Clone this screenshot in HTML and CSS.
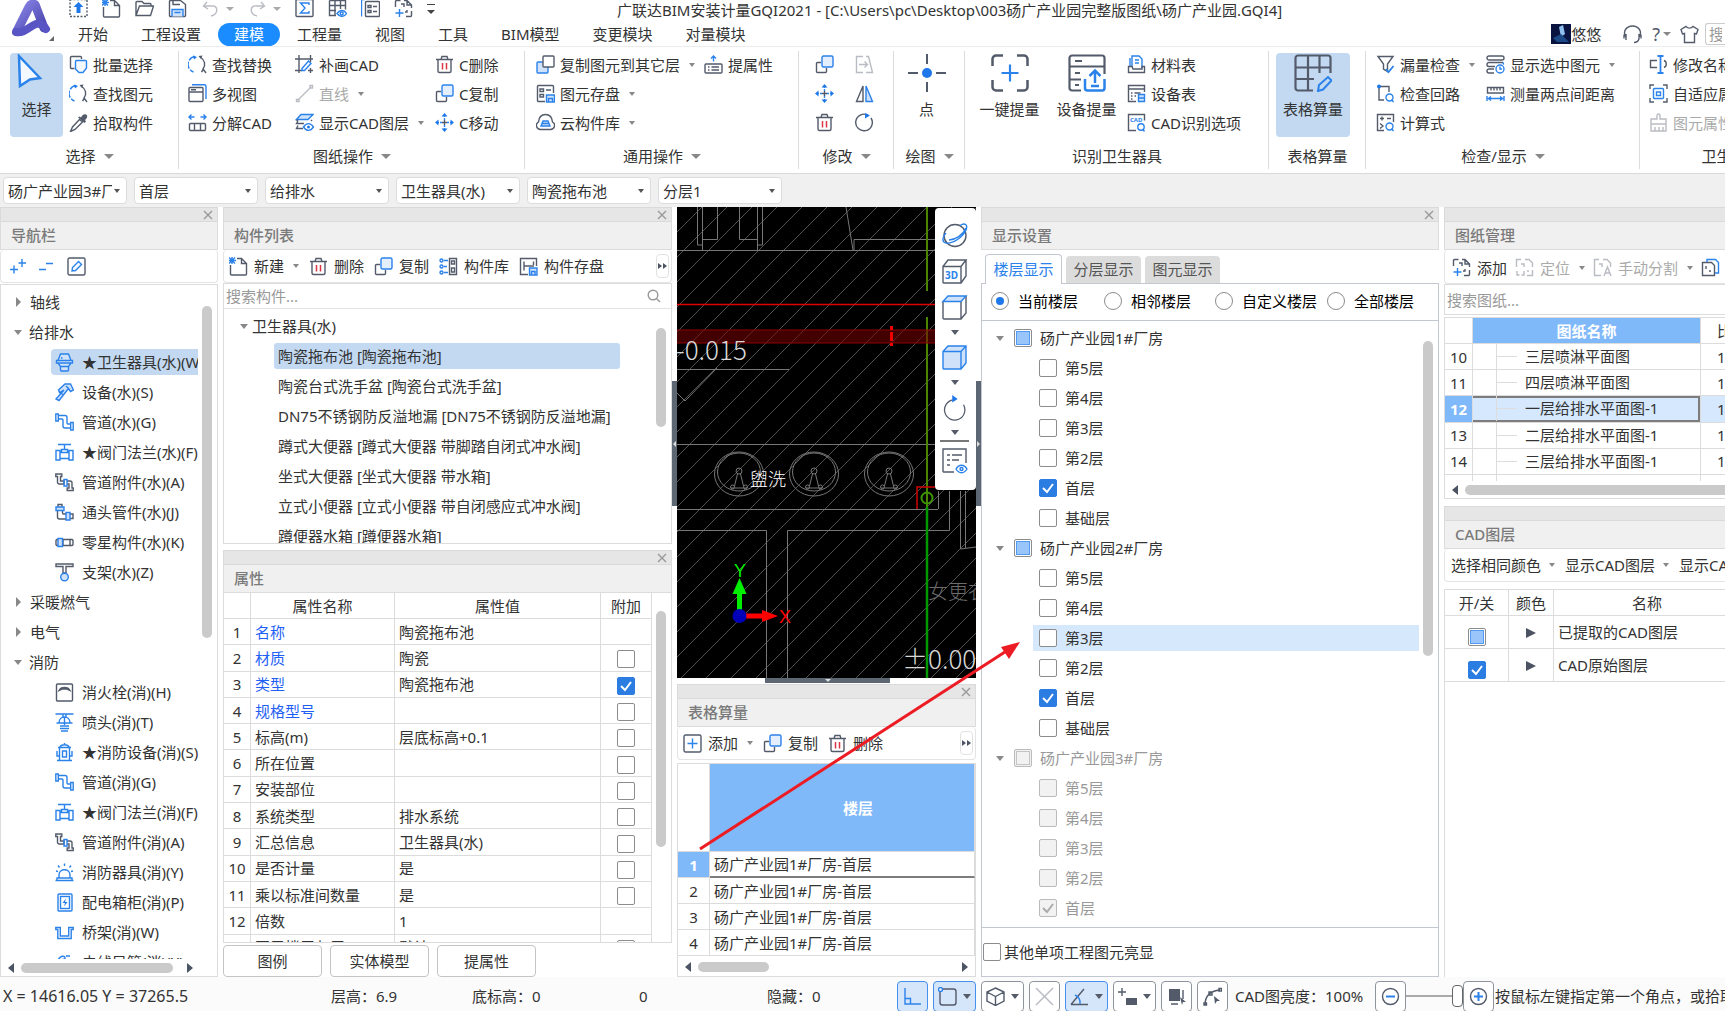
FILE: index.html
```html
<!DOCTYPE html>
<html lang="zh-CN">
<head>
<meta charset="utf-8">
<meta name="viewport" content="width=device-width, initial-scale=1">
<title>广联达BIM安装计量GQI2021</title>
<link rel="stylesheet" href="styles.css">
</head>
<body>
<svg class="sprite" aria-hidden="true">
  <defs>
    <linearGradient id="lg" x1="0" y1="0" x2="1" y2="1"><stop offset="0" stop-color="#8a86e8"/><stop offset="1" stop-color="#4440a8"/></linearGradient>
  </defs>
  <symbol id="i-updash" viewBox="0 0 19 19"><rect x="1" y="0.5" width="17" height="17" stroke-dasharray="2 1.5"/><path class="bf" d="M9.500 3l5 5h-3v6h-4V8h-3z"/></symbol>
  <symbol id="i-new" viewBox="0 0 19 19"><path d="M1.500 8v9a1 1 0 0 0 1 1h14a1 1 0 0 0 1-1V6.500l-5-5H8M12.500 1.500v5h5"/><path class="b" d="M0 .5l6 6M6 .5l-6 6M3 0v7M0 3.500h7"/></symbol>
  <symbol id="i-open" viewBox="0 0 19 19"><path d="M1 16V3.500a1 1 0 0 1 1-1h5l2 2h6a1 1 0 0 1 1 1V7M1 16.500L4.500 7H18.500l-3 9.500z"/></symbol>
  <symbol id="i-save" viewBox="0 0 19 19"><path d="M1.500 2.500a1 1 0 0 1 1-1h10l5 4v11a1 1 0 0 1-1 1h-14a1 1 0 0 1-1-1zM5 1.500v4h7"/><path class="bl" d="M4 17.500v-7h11v7M6.500 13.500h6"/></symbol>
  <symbol id="i-undo" viewBox="0 0 19 19"><path class="dim" d="M6 3L2.500 7 7 10M3 7h8c6-1 7 8-1 10"/></symbol>
  <symbol id="i-redo" viewBox="0 0 19 19"><path class="dim" d="M13 3l3.500 4L12 10M16 7H8c-6-1-7 8 1 10"/></symbol>
  <symbol id="i-sigma" viewBox="0 0 19 19"><rect x="1" y="0.5" width="17" height="17" rx="1"/><path class="b" d="M14 6V4H5.500l4.500 5-4.500 5H14v-2"/></symbol>
  <symbol id="i-grideye" viewBox="0 0 19 19"><path d="M1.500 1.500h16v9M1.500 1.500v15H8M1.500 6.500h16M1.500 11.500H8M7 1.500v15M12.500 1.500V10"/><path class="b" d="M9 14.500c3-4 7-4 9.500 0-2.500 4-6.500 4-9.500 0z"/><circle class="b" cx="13.700" cy="14.500" r="1.500"/></symbol>
  <symbol id="i-listdoc" viewBox="0 0 19 19"><path class="b" d="M4 .5H.5v17"/><rect x="4.500" y="2.500" width="14" height="15" rx="1"/><path d="M7 6.500h3v2H7zM7 11.500h3v2H7zM12 7.500h4M12 12.500h4"/></symbol>
  <symbol id="i-adddoc" viewBox="0 0 19 19"><path d="M1.500 8V2.500a1 1 0 0 1 1-1h4M10 1.500h3l4.500 4.500v3M17.500 12v4.500a1 1 0 0 1-1 1H12M13 1.500V6h4.500"/><path d="M7 5h3v3M13 11v2h-2"/><path class="b" d="M5.500 10v8M1.500 14h8"/></symbol>
  <symbol id="i-batch" viewBox="0 0 19 19"><path d="M5.500 13.500h-3a1 1 0 0 1-1-1v-10a1 1 0 0 1 1-1h9a1 1 0 0 1 1 1V4"/><path class="bw" d="M6.500 6.500a1 1 0 0 1 1-1h9a1 1 0 0 1 1 1V13l-3.500 4.500h-4L6.500 14z"/></symbol>
  <symbol id="i-find" viewBox="0 0 19 19"><path class="b" stroke-dasharray="7 1.500" d="M7 1.500A8 8 0 0 0 5.500 17"/><path class="bf" d="M5 .5l4 1.500-3 2.500z"/><path d="M12 2c5 3 6 8 3 12l3 4M15.500 14l-2 3"/><path class="gf" d="M10.500 1l4-.5-1.500 3.500z"/></symbol>
  <symbol id="i-pick" viewBox="0 0 19 19"><path d="M10.500 6.500l-7 7.500-2 4.500 4.500-2 7.500-7.500z"/><path class="gf" d="M9 4.500l1.500-1 1.500 1C13 2 15 .5 17 1.500s1.500 3.500-1 5.500l1 1.500-1.500 1.500z"/></symbol>
  <symbol id="i-multi" viewBox="0 0 19 19"><path class="b" d="M4 .8h12.500a1.500 1.500 0 0 1 1.500 1.500V15"/><rect x="1" y="3.500" width="14" height="14" rx="1"/><path d="M1 8h14M3 5.800h5"/></symbol>
  <symbol id="i-split" viewBox="0 0 19 19"><path class="b" d="M1 4h5.500M3.500 1.500L1 4l2.500 2.500M18 4h-5.500M15.500 1.500L18 4l-2.500 2.500"/><path d="M6.500 10.500h-4a1 1 0 0 0-1 1v5a1 1 0 0 0 1 1h4M6.500 10.500h6v7h-6zM12.500 10.500h4a1 1 0 0 1 1 1v5a1 1 0 0 1-1 1h-4"/></symbol>
  <symbol id="i-draw" viewBox="0 0 19 19"><path d="M0 4h18M4 0v18M0 15.500h7M15.500 0v7M13 15.500h5M15.500 13v5"/><path class="bw" d="M7 13.500L13.500 6l2.500 2.500-6.500 7H7z"/></symbol>
  <symbol id="i-line" viewBox="0 0 19 19"><path class="dim" d="M3 16L16 3M1.500 15.500h2.500v2H1.500zM15 1.500h2.500V4H15z"/></symbol>
  <symbol id="i-layers" viewBox="0 0 19 19"><path class="bl" d="M6 1.500h12L13 6.500H1.500z"/><path d="M3 8L1.500 10.500H9M16 7l1 1M3 12.500L1.500 15.500H8"/><path d="M3 6.800l-1.500 1"/><path class="b" d="M8.500 14c3-4.500 7-4.500 10 0-3 4.500-7 4.500-10 0z"/><circle class="bf" cx="13.500" cy="14" r="1.500"/></symbol>
  <symbol id="i-trash" viewBox="0 0 19 19"><path d="M1 4.500h17M6 4.500l1-3h5l1 3M3 4.500V16a1.500 1.500 0 0 0 1.500 1.500h10A1.500 1.500 0 0 0 16 16V4.500"/><path class="r" d="M7.500 8v6.500M11.500 8v6.500"/></symbol>
  <symbol id="i-copy" viewBox="0 0 19 19"><path d="M6 7.500H2.500a1 1 0 0 0-1 1v8a1 1 0 0 0 1 1h8a1 1 0 0 0 1-1V13"/><rect class="bl2" x="7" y="1" width="11" height="11" rx="1.500"/></symbol>
  <symbol id="i-copy2" viewBox="0 0 19 19"><rect class="bl" x="1" y="7" width="11" height="11" rx="1"/><rect class="w" x="7" y="1" width="11" height="11" rx="1"/></symbol>
  <symbol id="i-move" viewBox="0 0 19 19"><path class="b" stroke-dasharray="2 1" d="M9.500 2v5M9.500 12v5M2 9.500h5M12 9.500h5"/><path class="bf" d="M9.500 0l3 3.500h-6zM9.500 19l3-3.500h-6zM0 9.500l3.500-3v6zM19 9.500l-3.500-3v6z"/><path d="M9.500 7v5M7 9.500h5"/></symbol>
  <symbol id="i-form" viewBox="0 0 19 19"><path d="M9 17.500H2.500a1 1 0 0 1-1-1v-14a1 1 0 0 1 1-1h14a1 1 0 0 1 1 1V9"/><path d="M4 5h3.500v2.500H4zM10 6h5M4 10.500h3.500V13H4z"/><path class="bl" d="M10.500 11h8v7h-8zM12.500 14.500h4V18h-4z"/></symbol>
  <symbol id="i-cloud" viewBox="0 0 19 19"><path d="M4.500 16.500A4 4 0 0 1 2.500 9C3 4 6 1.500 9.500 1.500S16 4 16.500 9a4 4 0 0 1-2 7.500z"/><path class="bl" d="M7 8h5l2 5H5zM6 10.500h7"/></symbol>
  <symbol id="i-attr" viewBox="0 0 19 19"><path class="b" d="M9.500 6.500V1M7 3.500L9.500 1 12 3.500"/><rect x="1" y="9" width="17" height="9" rx="1"/><path d="M4 12h1.500M4 15h1.500M7.500 12H15M7.500 15H15"/></symbol>
  <symbol id="i-paste" viewBox="0 0 19 19"><path class="dim" d="M8 1.500H1.500v16H8M11 1.500h2.500l4 16H11M4 9.500h8M9.500 6.500l3 3-3 3"/></symbol>
  <symbol id="i-mirror" viewBox="0 0 19 19"><path d="M8 2v15.500H1.500z"/><path class="bl" d="M11 2v15.500h6.500z"/></symbol>
  <symbol id="i-rotate" viewBox="0 0 19 19"><path d="M13 2.200A8.300 8.300 0 1 0 16 5"/><path class="bf" d="M10 0l5 2.500-5 3z"/></symbol>
  <symbol id="i-cursor" viewBox="0 0 27 34"><path class="bw" stroke-width="2.500" d="M3 2l21 22-10 1.500L4 32z"/></symbol>
  <symbol id="i-point" viewBox="0 0 38 38"><path stroke-width="2" d="M19 0v10M19 28v10M0 19h10M28 19h10"/><circle class="bf" cx="19" cy="19" r="5"/></symbol>
  <symbol id="i-scan" viewBox="0 0 38 38"><path stroke-width="2.500" d="M1.500 12V5a3.500 3.500 0 0 1 3.500-3.500h7M26 1.500h7A3.500 3.500 0 0 1 36.500 5v7M36.500 26v7a3.500 3.500 0 0 1-3.500 3.500h-7M12 36.500H5A3.500 3.500 0 0 1 1.500 33v-7"/><path class="b" stroke-width="2.200" d="M19 10.500v17M10.500 19h17"/></symbol>
  <symbol id="i-device" viewBox="0 0 38 38"><path stroke-width="2.200" d="M13 36.500H4A2.500 2.500 0 0 1 1.500 34V4A2.500 2.500 0 0 1 4 1.500h30A2.500 2.500 0 0 1 36.500 4v16M1.500 12.500h35M1.500 25.500H13M7 7h7M7 19h5M7 31h4"/><path class="b" stroke-width="2.500" d="M17 25v9a2.500 2.500 0 0 0 2.500 2.500H34a2.500 2.500 0 0 0 2.500-2.500v-9M27 29V17M21.500 22l5.500-5.500 5.500 5.500M23 32h8"/></symbol>
  <symbol id="i-tcalc" viewBox="0 0 38 38"><path stroke-width="2.200" d="M19 36.500H4A2.500 2.500 0 0 1 1.500 34V4A2.500 2.500 0 0 1 4 1.500h30A2.500 2.500 0 0 1 36.500 4v15M1.500 13.500h35M1.500 25H20M14 1.500v35M25.500 1.500V19"/><path class="b" stroke-width="2" d="M24 37l1-6 9-8 3.500 3.500-8.500 9z"/></symbol>
  <symbol id="i-sheet" viewBox="0 0 19 19"><path class="b" d="M5 12V1h7l3 3v9M8 5h4M8 8h4M3 3v8"/><path d="M5 11.500H1.500v6h16v-6H15v2.500H6z"/></symbol>
  <symbol id="i-devtable" viewBox="0 0 19 19"><path d="M9 17.500H1.500v-16h16V8M1.500 5h16M4 9h1.500M7.500 9h6M4 12h1.500M4 15h1.500M7.500 12H9"/><path class="bl" d="M11.500 10.500h6v7h-6zM11.500 14h6"/></symbol>
  <symbol id="i-cadq" viewBox="0 0 19 19"><path d="M9 17.500H1.500v-16h16v6M1.500 9v8"/><text class="mini" x="3" y="9">CAD</text><circle class="b" cx="14" cy="14" r="3.200"/><path class="b" d="M15.500 16l2 2.500"/></symbol>
  <symbol id="i-filter" viewBox="0 0 19 19"><path d="M2 1.500h15L11.500 9v7.500L7.500 14V9z"/><path class="b" stroke-width="1.800" d="M10 14l2.500 3 5-6"/></symbol>
  <symbol id="i-loop" viewBox="0 0 19 19"><path d="M3 2.500V16h5M3 2.500h10V8"/><circle class="bf" cx="3" cy="2.500" r="2"/><circle class="b" cx="13.500" cy="13.500" r="3.500"/><path class="b" d="M15.500 15.500l2 2.500"/></symbol>
  <symbol id="i-calc" viewBox="0 0 19 19"><path d="M8 17.500H1.500v-16h16V9M4 5.500h4M6 3.500v4M11 5.500h4M4 10.500l3 2.500-3 2.500"/><circle class="b" cx="13.500" cy="13.500" r="3.500"/><path class="b" d="M15.500 15.500l2 2.500"/></symbol>
  <symbol id="i-shown" viewBox="0 0 19 19"><rect x="1" y="1" width="17" height="4" rx="2"/><path d="M17 7.500H3a2 2 0 0 0 0 4h6M8 14H3a2 2 0 0 0 0 4h5"/><path class="b" d="M17 7.500a1.500 1.500 0 0 1 0 2"/><circle class="b" cx="14" cy="14" r="4"/><path class="b" d="M14 11.500V14h2"/></symbol>
  <symbol id="i-measure" viewBox="0 0 19 19"><path d="M1.500 9V3.500h16V9zM5 4v2.500M8 4v2.500M11 4v2.500M14 4v2.500"/><path class="b" d="M1 12v5M18 12v5M2 14.500h15M5 12.500l-2.500 2L5 16.500M14 12.500l2.500 2-2.500 2"/></symbol>
  <symbol id="i-rename" viewBox="0 0 19 19"><path d="M8 5.500H1.500v7H8M15 5.500c3 1 3 6 0 7"/><path class="b" stroke-width="1.800" d="M8.500 1h6M8.500 18h6M11.500 1v17"/></symbol>
  <symbol id="i-adapt" viewBox="0 0 19 19"><path d="M1 5V1h4M14 1h4v4M18 14v4h-4M5 18H1v-4"/><rect class="b" x="4.500" y="4.500" width="10" height="10" rx="1"/><path class="b" d="M7.500 8h4v3.500h-4z"/></symbol>
  <symbol id="i-brush" viewBox="0 0 19 19"><path class="dim" d="M8 6V2.500a1.500 1.500 0 0 1 3 0V6h6v5H2V6zM2 11v7h15v-7M6 18v-4M10 18v-4M14 18v-4"/></symbol>
  <symbol id="i-toilet" viewBox="0 0 19 19"><path class="bl" d="M5.500 1h8l2.500 6.500H3zM1.500 7.500h16v2.500h-16zM3 10h13l-2.500 3.500V17a1 1 0 0 1-1 1h-6a1 1 0 0 1-1-1v-3.500z"/><path class="b" d="M6 5h1.500M5.500 13.500h8"/></symbol>
  <symbol id="i-tool" viewBox="0 0 19 19"><path class="bl" d="M1 16l8-9-4.500 2.500L3.500 7 10 1h5.500L18.500 7l-3 1.500-2-3L4 17.500z"/><path class="b" d="M8 11.500L4.500 9.500M11 3l2.500 2.500"/></symbol>
  <symbol id="i-pipe" viewBox="0 0 19 19"><path class="b" d="M.8 1h2.500v7H.8zM15.700 9.500h2.500v7.500h-2.500zM3.300 2.500H10a2 2 0 0 1 2 2V10a1 1 0 0 0 1 1h2.700M3.300 6H7a1 1 0 0 1 1 1v6a2 2 0 0 0 2 2h5.700"/></symbol>
  <symbol id="i-valve" viewBox="0 0 19 19"><path class="b" d="M3 1.500h13M9.500 1.500V6M6.500 6.500h6v3h-6zM5 9.500h9v6H5zM1 7.500h4v9.500H1zM14 7.500h4v9.500h-4z"/></symbol>
  <symbol id="i-fitting" viewBox="0 0 19 19"><path d="M.8 1h6v2.500H5.500V8H9v3H4.500a2 2 0 0 1-2-2V3.500H.8zM12 8h3a2 2 0 0 1 2 2v5h1.200v2.500h-6V15H14v-4h-2"/><path class="b" d="M9 6.500h3V13H9z"/></symbol>
  <symbol id="i-elbow" viewBox="0 0 19 19"><path d="M3 4V1.500h4V4M2.500 7.500V14a2 2 0 0 0 2 2H11M7.500 7.500V10a1 1 0 0 0 1 1H11M15 11h3v4.500h-3"/><path class="bl" d="M1 4h8v3.500H1zM11 9.500h4V17h-4z"/></symbol>
  <symbol id="i-conn" viewBox="0 0 19 19"><path d="M3 6.500H2a1.500 1.500 0 0 0-1 1v4a1.500 1.500 0 0 0 1 1h1M8 6.500h7v6H8z"/><path class="bl" d="M3 5.500h4.500v8H3z"/><path d="M15 6.500h2a1.500 1.500 0 0 1 1 1v4a1.500 1.500 0 0 1-1 1h-2"/></symbol>
  <symbol id="i-hanger" viewBox="0 0 19 19"><path d="M1 1h17v2.500h-7V10H8V3.500H1z"/><circle class="bl" cx="9.500" cy="14" r="3.800"/></symbol>
  <symbol id="i-hydrant" viewBox="0 0 19 19"><rect x="1.500" y="1" width="16" height="17" rx="1"/><path d="M4 7.500c2-4 9-4 11 0l-3-1.500H7z"/></symbol>
  <symbol id="i-sprinkler" viewBox="0 0 19 19"><path class="b" d="M.5 1h18M8 1v3M11 1v3M4 10c0-8 11-8 11 0M1.500 10h16M9.500 4v8M5 13h9M5 15.500h9M6 18h7"/></symbol>
  <symbol id="i-fdev" viewBox="0 0 19 19"><path class="b" d="M9.500 0v2M5 4c1-3 8-3 9 0M3 4.500h13M4.500 4.500V17M14.500 4.500V17M2 17.500h15M2 8v5h2.500M17 8v5h-2.500M7.500 8h4v6h-4z"/></symbol>
  <symbol id="i-alarm" viewBox="0 0 19 19"><path class="b" d="M.5 17.500h18M2 17.500V15h15v2.500M4 15v-3c0-7 11-7 11 0v3M9.500 3V.5M4.500 4.500l-1.500-2M14.500 4.500l1.500-2M1 8l2 .5M18 8l-2 .5"/></symbol>
  <symbol id="i-ebox" viewBox="0 0 19 19"><rect class="b" x="3" y="1" width="14" height="17" rx="1"/><rect class="b" x="5.500" y="3.500" width="9" height="12"/><path class="bf" d="M11 5.500L7.500 10H10l-1 3.500L12.500 9H10z"/></symbol>
  <symbol id="i-tray" viewBox="0 0 19 19"><path class="b" d="M.8 4.500h4.500v8.500h8.400V4.500h4.500v2h-2v9H2.800v-9h-2z"/></symbol>
  <symbol id="i-conduit" viewBox="0 0 19 19"><path class="b" d="M2 12C2 5 7 2 10 4M5 12c0-4 2-6 5-6M10 4v4M11 3h4M13 8h5"/></symbol>
  <symbol id="i-lib" viewBox="0 0 19 19"><path class="b" d="M5 3.500h4M5 9.500h3M5 15.500h4"/><circle class="b" cx="2.500" cy="3.500" r="1.500"/><circle class="b" cx="2.500" cy="9.500" r="1.500"/><circle class="b" cx="2.500" cy="15.500" r="1.500"/><path d="M10.500 1.500h7v16h-7zM12.500 4h3v3h-3zM12.500 11h3v4h-3z"/></symbol>
  <symbol id="i-store" viewBox="0 0 19 19"><path d="M9 17.500H1.500v-16h16V9M5 4.500v9M5 9h10M14.500 4.500V8"/><path class="bl" d="M10.500 11h7.500v7h-7.500zM12.500 14.500h3.500V18h-3.500z"/></symbol>
  <symbol id="i-plusbox" viewBox="0 0 19 19"><rect x="1" y="1" width="17" height="17" rx="1.500"/><path class="b" d="M9.500 4.500v10M4.500 9.500h10"/></symbol>
  <symbol id="i-locate" viewBox="0 0 19 19"><path class="dim" d="M1.500 9V1.500H6M10 1.500h4l3.500 3.500v4M17.500 12v5.500H12M6 6h3v3M2 13v4h2.500M9 13v4H6.500M13 12v2"/></symbol>
  <symbol id="i-cutA" viewBox="0 0 19 19"><path class="dim" d="M8 17.500H1.500v-16H6M10 1.500h4l3.500 3.500v4M6 6h3v3M11 18l3.500-9 3.500 9M12 15h5"/></symbol>
  <symbol id="i-docs" viewBox="0 0 19 19"><path d="M1.500 4.500h9l3 3v10h-12zM5 8v3M8 13h2"/><path class="b" d="M6 4V1.500h8.500l3 3V15H14"/></symbol>
  <symbol id="i-pp" viewBox="0 0 19 19"><path class="b" d="M5 8.500v8M1 12.500h8M13 2v8M9.500 6h7.500"/></symbol>
  <symbol id="i-mm" viewBox="0 0 19 19"><path class="b" d="M1 12.500h7M8 6.500h7"/></symbol>
  <symbol id="i-edit" viewBox="0 0 19 19"><rect x="1" y="1" width="17" height="17" rx="1.500"/><path class="bw" d="M5 14l.5-3.500 6-6 3 3-6 6z"/></symbol>
  <symbol id="i-x" viewBox="0 0 10 10"><path class="xx" d="M1 1l8 8M9 1l-8 8"/></symbol>
  <symbol id="i-mag" viewBox="0 0 14 14"><circle class="xx" cx="6" cy="6" r="4.800"/><path class="xx" d="M9.500 9.500L13 13"/></symbol>
  <symbol id="i-orbit" viewBox="0 0 27 27"><circle cx="14" cy="13.500" r="11"/><path class="b" d="M19 3.500C24 0 27 3 25 8 22 15 12 22 5 21c-5-1-3-7 0-10M8 18c6 0 14-5 17-12"/></symbol>
  <symbol id="i-cube3d" viewBox="0 0 27 27"><path d="M2 8.500h18V25H3a1 1 0 0 1-1-1zM2 8.500L7 2h18l-5 6.500M25 2v16l-5 7"/><text class="d3" x="4" y="21">3D</text></symbol>
  <symbol id="i-cubetop" viewBox="0 0 27 27"><path d="M2 7.500V24a1 1 0 0 0 1 1h17V7.500M20 25l5-6V2"/><path class="bl" d="M2 7.500L7 2h18l-5 5.500z"/></symbol>
  <symbol id="i-cubeblue" viewBox="0 0 27 27"><path class="bl" d="M2 7.500L7 2h18v17l-5 6H3a1 1 0 0 1-1-1zM2 7.500h18V25M20 7.500L25 2"/></symbol>
  <symbol id="i-rot2" viewBox="0 0 27 30"><path d="M12 6.500A11.300 11.300 0 1 0 23.500 12"/><path class="bf" d="M11 1l6 4.500-6 4z"/></symbol>
  <symbol id="i-listeye" viewBox="0 0 27 27"><path d="M13 25H3a1 1 0 0 1-1-1V2h23v14M6 8h3M11 8h10M6 13h3M11 13h7M6 18h3"/><path class="b" d="M15 22c3-5 8-5 11 0-3 5-8 5-11 0z"/><circle class="b" cx="20.500" cy="22" r="1.500"/></symbol>
  <symbol id="s-angle" viewBox="0 0 19 19"><path class="b" d="M2 1v16h16M2 11.500h5.500V17"/></symbol>
  <symbol id="s-rect" viewBox="0 0 19 19"><rect x="2" y="2" width="16" height="16" rx="2.500"/><circle class="bw" cx="2.500" cy="2.500" r="2"/></symbol>
  <symbol id="s-cube" viewBox="0 0 19 19"><path d="M9.500 1L18 5v9l-8.500 4.500L1 14V5zM1 5l8.500 4.500L18 5M9.500 9.500v9"/></symbol>
  <symbol id="s-x" viewBox="0 0 19 19"><path class="dim" stroke-width="1.500" d="M1 1l17 17M18 1L1 18"/></symbol>
  <symbol id="s-ang2" viewBox="0 0 19 19"><path d="M1 17.500h17M1 17.500L14 2"/><path class="b" d="M5 8a8 8 0 0 1 5 9"/></symbol>
  <symbol id="s-dim" viewBox="0 0 19 19"><path d="M4 1v8M0 5h8"/><path class="gf" d="M8 11h11v7H8z"/></symbol>
  <symbol id="s-sel" viewBox="0 0 19 19"><path class="gf" d="M2 2h11v12H2z"/><path d="M16 3v9M4 17h7"/><path class="gf" d="M13 10l6 5h-3l-1 3z"/></symbol>
  <symbol id="s-curve" viewBox="0 0 19 19"><path d="M2 18C2 10 6 4 17 3M1 16h2.500v2H1zM6 5h3v3H6zM16 1.500h2.500V4H16z"/><path class="gf" d="M11 9l6 5h-3l-2 3z"/></symbol>
  <symbol id="s-minus" viewBox="0 0 19 19"><circle cx="9.500" cy="9.500" r="8"/><path class="b" stroke-width="2" d="M5 9.500h9"/></symbol>
  <symbol id="s-plus" viewBox="0 0 19 19"><circle cx="9.500" cy="9.500" r="8"/><path class="b" stroke-width="2" d="M5 9.500h9M9.500 5v9"/></symbol>
  <symbol id="i-head" viewBox="0 0 19 19"><path d="M3 12C-1 6 4 1 9.500 1S20 6 16 12M3 9v6M16 9v5c-1 3-3 3.500-5 3.500M1 9.500v4M18 9.500v4"/></symbol>
  <symbol id="i-shirt" viewBox="0 0 19 19"><path d="M6 1.500c2 2 5 2 7 0l5 3-1.500 4.500-2-.5v9h-10v-9l-2 .5L1 4.500z"/></symbol>
</svg>

<header class="top">
  <div class="brand">
    <svg class="logo" viewBox="0 0 44 42" role="img" aria-label="GQI"><path d="M6 31L18 7c2-4 6-4 7 0l8 21" fill="none" stroke="url(#lg)" stroke-width="9" stroke-linecap="round" stroke-linejoin="round"/><path d="M5 32c8 2 14-6 20-8s8 3 10 5" fill="none" stroke="#5a55c4" stroke-width="8" stroke-linecap="round"/><path d="M43 36v5h-5z" fill="#666"/></svg>
  </div>
  <div class="topmain">
    <div class="quick">
      <div class="qicons">
        <button aria-label="上传"><svg class="ic"><use href="#i-updash"/></svg></button>
        <button aria-label="新建工程"><svg class="ic"><use href="#i-new"/></svg></button>
        <button aria-label="打开"><svg class="ic"><use href="#i-open"/></svg></button>
        <button aria-label="保存"><svg class="ic"><use href="#i-save"/></svg></button>
        <button class="dd" aria-label="撤销"><svg class="ic"><use href="#i-undo"/></svg><i class="tri"></i></button>
        <button class="dd" aria-label="恢复"><svg class="ic"><use href="#i-redo"/></svg><i class="tri"></i></button>
        <button aria-label="汇总"><svg class="ic"><use href="#i-sigma"/></svg></button>
        <button aria-label="查看表格"><svg class="ic"><use href="#i-grideye"/></svg></button>
        <button aria-label="列表"><svg class="ic"><use href="#i-listdoc"/></svg></button>
        <button aria-label="添加图纸"><svg class="ic"><use href="#i-adddoc"/></svg></button>
        <button class="morebtn" aria-label="更多"><i class="tri more"></i></button>
      </div>
      <h1>广联达BIM安装计量GQI2021 - [C:\Users\pc\Desktop\003砀广产业园完整版图纸\砀广产业园.GQI4]</h1>
    </div>
    <div class="tabrow">
      <nav class="tabs"><a href="#">开始</a><a href="#">工程设置</a><a href="#" class="on">建模</a><a href="#">工程量</a><a href="#">视图</a><a href="#">工具</a><a href="#">BIM模型</a><a href="#">变更模块</a><a href="#">对量模块</a></nav>
      <div class="user">
        <svg class="avatar" viewBox="0 0 20 20" aria-hidden="true"><rect width="20" height="20" fill="#0a1440"/><path d="M8 3l4-2 2 9-4 3z" fill="#8fc0ee"/><path d="M2 14l8-4 8 8H6z" fill="#1c4a86"/></svg><span class="uname">悠悠</span>
        <button aria-label="客服"><svg class="ic"><use href="#i-head"/></svg></button>
        <button class="help" aria-label="帮助">?<i class="tri"></i></button>
        <button aria-label="皮肤"><svg class="ic"><use href="#i-shirt"/></svg></button>
        <input class="gsearch" type="text" placeholder="搜索功能" aria-label="搜索功能">
      </div>
    </div>
  </div>
</header>

<div class="ribbon">
  <section class="group g1"><div class="body">
    <button class="big on"><svg class="cur"><use href="#i-cursor"/></svg>选择</button>
    <div class="col"><button><svg class="ic"><use href="#i-batch"/></svg>批量选择</button><button><svg class="ic"><use href="#i-find"/></svg>查找图元</button><button><svg class="ic"><use href="#i-pick"/></svg>拾取构件</button></div>
  </div><h2>选择<i class="tri big-tri"></i></h2></section>
  <section class="group g2"><div class="body">
    <div class="col"><button><svg class="ic"><use href="#i-find"/></svg>查找替换</button><button><svg class="ic"><use href="#i-multi"/></svg>多视图</button><button><svg class="ic"><use href="#i-split"/></svg>分解CAD</button></div>
    <div class="col"><button><svg class="ic"><use href="#i-draw"/></svg>补画CAD</button><button class="off"><svg class="ic"><use href="#i-line"/></svg>直线<i class="tri"></i></button><button><svg class="ic"><use href="#i-layers"/></svg>显示CAD图层<i class="tri"></i></button></div>
    <div class="col"><button><svg class="ic"><use href="#i-trash"/></svg>C删除</button><button><svg class="ic"><use href="#i-copy"/></svg>C复制</button><button><svg class="ic"><use href="#i-move"/></svg>C移动</button></div>
  </div><h2>图纸操作<i class="tri big-tri"></i></h2></section>
  <section class="group g3"><div class="body">
    <div class="col"><button><svg class="ic"><use href="#i-copy2"/></svg>复制图元到其它层<i class="tri"></i></button><button><svg class="ic"><use href="#i-form"/></svg>图元存盘<i class="tri"></i></button><button><svg class="ic"><use href="#i-cloud"/></svg>云构件库<i class="tri"></i></button></div>
    <div class="col"><button><svg class="ic"><use href="#i-attr"/></svg>提属性</button></div>
  </div><h2>通用操作<i class="tri big-tri"></i></h2></section>
  <section class="group g4"><div class="body">
    <div class="col"><button aria-label="复制"><svg class="ic"><use href="#i-copy"/></svg></button><button aria-label="移动"><svg class="ic"><use href="#i-move"/></svg></button><button aria-label="删除"><svg class="ic"><use href="#i-trash"/></svg></button></div>
    <div class="col"><button aria-label="延伸"><svg class="ic"><use href="#i-paste"/></svg></button><button aria-label="镜像"><svg class="ic"><use href="#i-mirror"/></svg></button><button aria-label="旋转"><svg class="ic"><use href="#i-rotate"/></svg></button></div>
  </div><h2>修改<i class="tri big-tri"></i></h2></section>
  <section class="group g5"><div class="body">
    <button class="big"><svg class="ic38"><use href="#i-point"/></svg>点</button>
  </div><h2>绘图<i class="tri big-tri"></i></h2></section>
  <section class="group g6"><div class="body">
    <button class="big"><svg class="ic38"><use href="#i-scan"/></svg>一键提量</button>
    <button class="big"><svg class="ic38"><use href="#i-device"/></svg>设备提量</button>
    <div class="col"><button><svg class="ic"><use href="#i-sheet"/></svg>材料表</button><button><svg class="ic"><use href="#i-devtable"/></svg>设备表</button><button><svg class="ic"><use href="#i-cadq"/></svg>CAD识别选项</button></div>
  </div><h2>识别卫生器具</h2></section>
  <section class="group g7"><div class="body">
    <button class="big on"><svg class="ic38"><use href="#i-tcalc"/></svg>表格算量</button>
  </div><h2>表格算量</h2></section>
  <section class="group g8"><div class="body">
    <div class="col"><button><svg class="ic"><use href="#i-filter"/></svg>漏量检查<i class="tri"></i></button><button><svg class="ic"><use href="#i-loop"/></svg>检查回路</button><button><svg class="ic"><use href="#i-calc"/></svg>计算式</button></div>
    <div class="col"><button><svg class="ic"><use href="#i-shown"/></svg>显示选中图元<i class="tri"></i></button><button><svg class="ic"><use href="#i-measure"/></svg>测量两点间距离</button></div>
  </div><h2>检查/显示<i class="tri big-tri"></i></h2></section>
  <section class="group g9"><div class="body">
    <div class="col"><button><svg class="ic"><use href="#i-rename"/></svg>修改名称</button><button><svg class="ic"><use href="#i-adapt"/></svg>自适应属性</button><button class="off"><svg class="ic"><use href="#i-brush"/></svg>图元属性刷</button></div>
  </div><h2>卫生器具</h2></section>
</div>

<div class="selects">
  <select aria-label="单项工程"><option>砀广产业园3#厂房</option></select>
  <select aria-label="楼层"><option>首层</option></select>
  <select aria-label="专业"><option>给排水</option></select>
  <select aria-label="构件类型"><option>卫生器具(水)</option></select>
  <select aria-label="构件"><option>陶瓷拖布池</option></select>
  <select aria-label="分层"><option>分层1</option></select>
</div>

<main class="work">
  <section class="panel nav">
    <div class="strip"><button aria-label="关闭"><svg class="xi"><use href="#i-x"/></svg></button></div>
    <h3>导航栏</h3>
    <div class="bar navbar"><button aria-label="全部展开"><svg class="ic"><use href="#i-pp"/></svg></button><button aria-label="全部折叠"><svg class="ic"><use href="#i-mm"/></svg></button><button aria-label="编辑"><svg class="ic"><use href="#i-edit"/></svg></button></div>
    <div class="box navbox">
      <div class="scrollrow">
        <ul class="tree">
          <li class="top-li"><i class="exp"></i>轴线</li>
          <li class="top-li"><i class="exp open"></i>给排水</li>
          <li><span class="on"><svg class="ic"><use href="#i-toilet"/></svg>★卫生器具(水)(W)</span></li>
          <li><span><svg class="ic"><use href="#i-tool"/></svg>设备(水)(S)</span></li>
          <li><span><svg class="ic"><use href="#i-pipe"/></svg>管道(水)(G)</span></li>
          <li><span><svg class="ic"><use href="#i-valve"/></svg>★阀门法兰(水)(F)</span></li>
          <li><span><svg class="ic"><use href="#i-fitting"/></svg>管道附件(水)(A)</span></li>
          <li><span><svg class="ic"><use href="#i-elbow"/></svg>通头管件(水)(J)</span></li>
          <li><span><svg class="ic"><use href="#i-conn"/></svg>零星构件(水)(K)</span></li>
          <li><span><svg class="ic"><use href="#i-hanger"/></svg>支架(水)(Z)</span></li>
          <li class="top-li"><i class="exp"></i>采暖燃气</li>
          <li class="top-li"><i class="exp"></i>电气</li>
          <li class="top-li"><i class="exp open"></i>消防</li>
          <li><span><svg class="ic"><use href="#i-hydrant"/></svg>消火栓(消)(H)</span></li>
          <li><span><svg class="ic"><use href="#i-sprinkler"/></svg>喷头(消)(T)</span></li>
          <li><span><svg class="ic"><use href="#i-fdev"/></svg>★消防设备(消)(S)</span></li>
          <li><span><svg class="ic"><use href="#i-pipe"/></svg>管道(消)(G)</span></li>
          <li><span><svg class="ic"><use href="#i-valve"/></svg>★阀门法兰(消)(F)</span></li>
          <li><span><svg class="ic"><use href="#i-fitting"/></svg>管道附件(消)(A)</span></li>
          <li><span><svg class="ic"><use href="#i-alarm"/></svg>消防器具(消)(Y)</span></li>
          <li><span><svg class="ic"><use href="#i-ebox"/></svg>配电箱柜(消)(P)</span></li>
          <li><span><svg class="ic"><use href="#i-tray"/></svg>桥架(消)(W)</span></li>
          <li><span><svg class="ic"><use href="#i-conduit"/></svg>电线导管(消)(X)</span></li>
        </ul>
        <div class="vs"><div class="thumb t-nav"></div></div>
      </div>
      <div class="hs"><i class="al"></i><div class="thumb h-nav"></div><i class="ar"></i></div>
    </div>
  </section>

  <div class="colstack">
    <section class="panel list">
      <div class="strip"><button aria-label="关闭"><svg class="xi"><use href="#i-x"/></svg></button></div>
      <h3>构件列表</h3>
      <div class="bar tools"><button><svg class="ic"><use href="#i-new"/></svg>新建<i class="tri"></i></button><button><svg class="ic"><use href="#i-trash"/></svg>删除</button><button><svg class="ic"><use href="#i-copy"/></svg>复制</button><button><svg class="ic"><use href="#i-lib"/></svg>构件库</button><button><svg class="ic"><use href="#i-store"/></svg>构件存盘</button><button class="over" aria-label="更多"><i class="ar"></i><i class="ar"></i></button></div>
      <div class="box listbox">
        <div class="search"><input type="text" placeholder="搜索构件..." aria-label="搜索构件"><svg class="mag"><use href="#i-mag"/></svg></div>
        <div class="scrollrow">
          <ul class="items">
            <li class="head"><i class="exp open"></i>卫生器具(水)</li>
            <li><span class="on">陶瓷拖布池 [陶瓷拖布池]</span></li>
            <li><span>陶瓷台式洗手盆 [陶瓷台式洗手盆]</span></li>
            <li><span>DN75不锈钢防反溢地漏 [DN75不锈钢防反溢地漏]</span></li>
            <li><span>蹲式大便器 [蹲式大便器 带脚踏自闭式冲水阀]</span></li>
            <li><span>坐式大便器 [坐式大便器 带水箱]</span></li>
            <li><span>立式小便器 [立式小便器 带自闭感应式冲水阀]</span></li>
            <li><span>蹲便器水箱 [蹲便器水箱]</span></li>
          </ul>
          <div class="vs"><div class="thumb t-list"></div></div>
        </div>
      </div>
    </section>
    <section class="panel props">
      <div class="strip"><button aria-label="关闭"><svg class="xi"><use href="#i-x"/></svg></button></div>
      <h3>属性</h3>
      <div class="box propbox scrollrow">
        <div class="clip"><table class="ptable">
          <colgroup><col class="c-n"><col class="c-name"><col><col class="c-add"></colgroup>
          <thead><tr><th></th><th>属性名称</th><th>属性值</th><th>附加</th></tr></thead>
          <tbody>
          <tr><td>1</td><td class="key">名称</td><td>陶瓷拖布池</td><td></td></tr>
          <tr><td>2</td><td class="key">材质</td><td>陶瓷</td><td><input type="checkbox" aria-label="材质附加"></td></tr>
          <tr><td>3</td><td class="key">类型</td><td>陶瓷拖布池</td><td><input type="checkbox" checked aria-label="类型附加"></td></tr>
          <tr><td>4</td><td class="key">规格型号</td><td></td><td><input type="checkbox" aria-label="规格型号附加"></td></tr>
          <tr><td>5</td><td>标高(m)</td><td>层底标高+0.1</td><td><input type="checkbox" aria-label="标高附加"></td></tr>
          <tr><td>6</td><td>所在位置</td><td></td><td><input type="checkbox" aria-label="所在位置附加"></td></tr>
          <tr><td>7</td><td>安装部位</td><td></td><td><input type="checkbox" aria-label="安装部位附加"></td></tr>
          <tr><td>8</td><td>系统类型</td><td>排水系统</td><td><input type="checkbox" aria-label="系统类型附加"></td></tr>
          <tr><td>9</td><td>汇总信息</td><td>卫生器具(水)</td><td><input type="checkbox" aria-label="汇总信息附加"></td></tr>
          <tr><td>10</td><td>是否计量</td><td>是</td><td><input type="checkbox" aria-label="是否计量附加"></td></tr>
          <tr><td>11</td><td>乘以标准间数量</td><td>是</td><td><input type="checkbox" aria-label="乘以标准间数量附加"></td></tr>
          <tr><td>12</td><td>倍数</td><td>1</td><td></td></tr>
          <tr><td>13</td><td>图元楼层归属</td><td>默认</td><td><input type="checkbox" aria-label="图元楼层归属附加"></td></tr>
          </tbody>
        </table></div>
        <div class="vs"><div class="thumb t-prop"></div></div>
      </div>
      <div class="pbtns"><button>图例</button><button>实体模型</button><button>提属性</button></div>
    </section>
  </div>

  <div class="colstack mid">
    <div class="canvas">
      <svg class="cad" viewBox="0 0 299 471" preserveAspectRatio="xMinYMin slice" role="img" aria-label="CAD 图纸">
        <defs><pattern id="hatch" width="25" height="25" patternUnits="userSpaceOnUse"><path d="M-1 26L26-1" stroke="#505050" stroke-width="1"/></pattern>
        <g id="sink"><ellipse rx="24.500" ry="22"/><ellipse cy="-2" rx="21.500" ry="19"/><circle cy="-3" r="3"/><path d="M-1.500 0l-3 12M1.500 0l3 12M-8 14H8"/><circle cx="-6.500" cy="13" r="2"/><circle cx="6.500" cy="13" r="2"/></g></defs>
        <rect width="299" height="471" fill="#000"/><rect width="299" height="471" fill="url(#hatch)"/>
        <g class="cl"><path d="M20.500 0V38H25M25.500 0V43M40.500 0V32.500H25M62.500 0V32.500H80M80.500 0V43M85.500 0V38H80M0 43.500H258M169 0l7 43M177 43V32.500H258M0 162.500H112M40 161L8 194l-8-8M0 237.500H258M0 302.500H261M0 323.500H89.500V471M110.500 471V323.500H272.500V284M261.500 284V302M283.500 284V342L299 340M288.500 284V341"/>
        <use href="#sink" x="62" y="267"/><use href="#sink" x="137" y="267"/><use href="#sink" x="212" y="267"/></g>
        <path d="M250 0V84M250 110V300" stroke="#4a8500" stroke-width="2"/><path d="M250 300V471" stroke="#009a00" stroke-width="2.500"/>
        <path d="M0 97.500H258" stroke="#e00000" stroke-width="1.500"/><rect x="-2" y="123" width="262" height="13" fill="#7a0000" fill-opacity=".55" stroke="#8c0000"/><path d="M214.500 119v20" stroke="#f00000" stroke-width="3" stroke-dasharray="4 2 9 2"/>
        <path d="M240 302V280H258" fill="none" stroke="#d00000" stroke-width="1.500"/><circle cx="250" cy="291" r="5.500" fill="none" stroke="#3c9600" stroke-width="2"/>
        <text class="ct" x="-1" y="153">-0.015</text><text class="ct cjk" x="73" y="279">盥洗</text><text class="ct gray" x="251" y="392">女更衣</text><text class="ct" x="225" y="462">±0.000</text>
        <path d="M62.500 404V386" stroke="#00ee00" stroke-width="5"/><path d="M62.500 371l7 16h-14z" fill="#0e0"/><path d="M68 409H86" stroke="#f00" stroke-width="5"/><path d="M101 409l-16-6v12z" fill="#f00"/><circle cx="62.500" cy="409" r="7" fill="#0000b8"/>
        <text class="ax" x="57" y="370" fill="#0e0">Y</text><text class="ax" x="102" y="416" fill="#f00">X</text>
      </svg>
      <i class="grip l"><i></i></i><i class="grip r"><i></i></i><i class="grip b"><i></i></i>
      <div class="float">
        <button aria-label="动态观察"><svg class="ic27"><use href="#i-orbit"/></svg></button>
        <button aria-label="三维"><svg class="ic27"><use href="#i-cube3d"/></svg></button>
        <button aria-label="俯视"><svg class="ic27"><use href="#i-cubetop"/></svg><i class="tri dk"></i></button>
        <button aria-label="实体"><svg class="ic27"><use href="#i-cubeblue"/></svg><i class="tri dk"></i></button>
        <button aria-label="旋转视图"><svg class="ic27"><use href="#i-rot2"/></svg><i class="tri dk"></i></button>
        <hr>
        <button aria-label="显示设置"><svg class="ic27"><use href="#i-listeye"/></svg></button>
      </div>
    </div>
    <section class="panel calc">
      <div class="strip"><button aria-label="关闭"><svg class="xi"><use href="#i-x"/></svg></button></div>
      <h3>表格算量</h3>
      <div class="bar tools"><button><svg class="ic"><use href="#i-plusbox"/></svg>添加<i class="tri"></i></button><button><svg class="ic"><use href="#i-copy"/></svg>复制</button><button><svg class="ic"><use href="#i-trash"/></svg>删除</button><button class="over" aria-label="更多"><i class="ar"></i><i class="ar"></i></button></div>
      <div class="box calcbox">
        <table class="ctable"><colgroup><col class="c-num"><col></colgroup>
          <thead><tr><th></th><th class="hl">楼层</th></tr></thead>
          <tbody><tr class="cur-row"><td class="hl">1</td><td>砀广产业园1#厂房-首层</td></tr><tr><td>2</td><td>砀广产业园1#厂房-首层</td></tr><tr><td>3</td><td>砀广产业园1#厂房-首层</td></tr><tr><td>4</td><td>砀广产业园1#厂房-首层</td></tr></tbody>
        </table>
        <div class="hs"><i class="al"></i><div class="thumb h-calc"></div><i class="ar"></i></div>
      </div>
    </section>
  </div>

  <section class="panel display">
    <div class="strip"><button aria-label="关闭"><svg class="xi"><use href="#i-x"/></svg></button></div>
    <h3>显示设置</h3>
    <div class="dtabs" role="tablist"><button role="tab" class="on">楼层显示</button><button role="tab">分层显示</button><button role="tab">图元显示</button></div>
    <div class="dbox">
      <div class="radios"><label><input type="radio" name="fl" checked>当前楼层</label><label><input type="radio" name="fl">相邻楼层</label><label><input type="radio" name="fl">自定义楼层</label><label><input type="radio" name="fl">全部楼层</label></div>
      <div class="floorbox scrollrow">
        <ul class="floors">
          <li class="bld"><i class="exp open"></i><label><input type="checkbox" class="partial">砀广产业园1#厂房</label></li>
          <li><label><input type="checkbox">第5层</label></li><li><label><input type="checkbox">第4层</label></li><li><label><input type="checkbox">第3层</label></li><li><label><input type="checkbox">第2层</label></li><li><label><input type="checkbox" checked>首层</label></li><li><label><input type="checkbox">基础层</label></li>
          <li class="bld"><i class="exp open"></i><label><input type="checkbox" class="partial">砀广产业园2#厂房</label></li>
          <li><label><input type="checkbox">第5层</label></li><li><label><input type="checkbox">第4层</label></li><li class="hover"><label><input type="checkbox">第3层</label></li><li><label><input type="checkbox">第2层</label></li><li><label><input type="checkbox" checked>首层</label></li><li><label><input type="checkbox">基础层</label></li>
          <li class="bld dis"><i class="exp open"></i><label><input type="checkbox" class="partial" disabled>砀广产业园3#厂房</label></li>
          <li class="dis"><label><input type="checkbox" disabled>第5层</label></li><li class="dis"><label><input type="checkbox" disabled>第4层</label></li><li class="dis"><label><input type="checkbox" disabled>第3层</label></li><li class="dis"><label><input type="checkbox" disabled>第2层</label></li><li class="dis"><label><input type="checkbox" checked disabled>首层</label></li>
        </ul>
        <div class="vs"><div class="thumb t-floor"></div></div>
      </div>
      <label class="other"><input type="checkbox">其他单项工程图元亮显</label>
    </div>
  </section>

  <div class="colstack right">
    <section class="panel drawings">
      <div class="strip"></div>
      <h3>图纸管理</h3>
      <div class="bar tools"><button><svg class="ic"><use href="#i-adddoc"/></svg>添加</button><button class="off"><svg class="ic"><use href="#i-locate"/></svg>定位<i class="tri"></i></button><button class="off"><svg class="ic"><use href="#i-cutA"/></svg>手动分割<i class="tri"></i></button><button aria-label="复制图纸"><svg class="ic"><use href="#i-docs"/></svg></button></div>
      <div class="search dsearch"><input type="text" placeholder="搜索图纸..." aria-label="搜索图纸"></div>
      <div class="box drawbox">
        <table class="dtable"><colgroup><col class="c-i"><col class="c-d"><col></colgroup>
          <thead><tr><th></th><th class="hl">图纸名称</th><th>比例</th></tr></thead>
          <tbody>
          <tr><td>10</td><td><span class="branch">三层喷淋平面图</span></td><td>1:1</td></tr>
          <tr><td>11</td><td><span class="branch">四层喷淋平面图</span></td><td>1:1</td></tr>
          <tr class="sel"><td class="hl">12</td><td><span class="branch">一层给排水平面图-1</span></td><td>1:1</td></tr>
          <tr><td>13</td><td><span class="branch">二层给排水平面图-1</span></td><td>1:1</td></tr>
          <tr><td>14</td><td><span class="branch">三层给排水平面图-1</span></td><td>1:1</td></tr>
          <tr class="rest"><td></td><td><span class="branch none"></span></td><td></td></tr>
          </tbody></table>
        <div class="hs"><i class="al"></i><div class="thumb h-draw"></div></div>
      </div>
    </section>
    <section class="panel layers">
      <div class="strip"></div>
      <h3>CAD图层</h3>
      <div class="bar tools lay"><button>选择相同颜色<i class="tri"></i></button><button>显示CAD图层<i class="tri"></i></button><button>显示CAD图元</button></div>
      <div class="laybox">
        <table class="ltable"><colgroup><col class="c-sw"><col class="c-co"><col></colgroup>
          <thead><tr><th>开/关</th><th>颜色</th><th>名称</th></tr></thead>
          <tbody><tr><td><input type="checkbox" class="partial" aria-label="已提取的CAD图层"></td><td><i class="play"></i></td><td>已提取的CAD图层</td></tr>
          <tr><td><input type="checkbox" checked aria-label="CAD原始图层"></td><td><i class="play"></i></td><td>CAD原始图层</td></tr></tbody></table>
      </div>
    </section>
  </div>

  <svg class="pointer" viewBox="0 0 330 220" aria-hidden="true"><path d="M4 212L312 13" stroke="#ed1c24" stroke-width="3"/><path d="M324 5l-11 17-8-12z" fill="#ed1c24"/></svg>
</main>

<footer class="status">
  <span class="s-xy">X = 14616.05 Y = 37265.5</span><span class="s-h">层高：6.9</span><span class="s-b">底标高：0</span><span class="s-z">0</span><span class="s-hid">隐藏：0</span>
  <div class="sbtns">
    <button class="on" aria-label="正交"><svg class="ic"><use href="#s-angle"/></svg></button>
    <button class="on wide" aria-label="捕捉"><svg class="ic"><use href="#s-rect"/></svg><i class="tri dk"></i></button>
    <button class="wide" aria-label="视图"><svg class="ic"><use href="#s-cube"/></svg><i class="tri dk"></i></button>
    <button aria-label="交点"><svg class="ic"><use href="#s-x"/></svg></button>
    <button class="on wide" aria-label="角度"><svg class="ic"><use href="#s-ang2"/></svg><i class="tri dk"></i></button>
    <button class="wide" aria-label="动态输入"><svg class="ic"><use href="#s-dim"/></svg><i class="tri dk"></i></button>
    <button aria-label="选择"><svg class="ic"><use href="#s-sel"/></svg></button>
    <button aria-label="折线"><svg class="ic"><use href="#s-curve"/></svg></button>
  </div>
  <span class="bright">CAD图亮度：100%</span>
  <div class="zoomer"><button aria-label="降低亮度"><svg class="ic"><use href="#s-minus"/></svg></button><input type="range" value="100" aria-label="CAD图亮度"><button aria-label="提高亮度"><svg class="ic"><use href="#s-plus"/></svg></button></div>
  <span class="tip">按鼠标左键指定第一个角点，或拾取构件图元</span>
</footer>
</body>
</html>
```
FILE: styles.css
```css
* { box-sizing: border-box; }
:root {
  --line: #dcdcdc;
  --ink: #333;
  --icon: #535b6b;
  --blue: #2b82ea;
  --pale: #c2d9f1;
  --head: #7fb9fa;
}
body {
  margin: 0;
  height: 100vh;
  display: flex;
  flex-direction: column;
  overflow: hidden;
  background: #fff;
  color: var(--ink);
  font: 15px/20px "Noto Sans", "Noto Sans CJK SC", sans-serif;
}
button, input, select { font: inherit; color: inherit; }
button { border: 0; background: none; padding: 0; display: flex; align-items: center; white-space: nowrap; }
h1, h2, h3, ul { margin: 0; padding: 0; font-weight: normal; font-size: 15px; list-style: none; }
a { color: inherit; text-decoration: none; }

/* icons */
.sprite { position: absolute; width: 0; height: 0; }
.ic { width: 19px; height: 19px; }
.ic38 { width: 38px; height: 38px; }
.ic27 { width: 27px; height: 27px; }
.xi { width: 10px; height: 10px; }
.mag { width: 14px; height: 14px; flex: none; }
.cur { width: 27px; height: 34px; }
.ic, .ic38, .ic27, .xi, .mag, .cur { flex: none; fill: none; stroke: var(--icon); stroke-width: 1.4; }
.b { stroke: var(--blue); }
.bf { stroke: none; fill: #1f78ea; }
.gf { stroke: none; fill: var(--icon); }
.bw { stroke: var(--blue); fill: #f4f9ff; }
.bl { stroke: var(--blue); fill: #cfe2fa; }
.bl2 { stroke: var(--blue); fill: #e3effd; }
.w { fill: #fff; }
.r { stroke: #dc3545; stroke-width: 1.5; }
.dim { stroke: #b9bcc2; }
.xx { stroke: #999; }
.mini { font: bold 6px "Noto Sans", sans-serif; fill: var(--blue); stroke: none; }
.d3 { font: bold 10px "Noto Sans", sans-serif; fill: var(--blue); stroke: none; }
.tri { width: 0; height: 0; border: 3px solid transparent; border-top: 4px solid #888; border-bottom: 0; flex: none; }
.big-tri { border-width: 5px; border-top-width: 5px; border-bottom: 0; margin-left: 8px; }
.dk { border-width: 4px; border-top: 5px solid #555b68; border-bottom: 0; }
.al, .ar { width: 0; height: 0; border: 5px solid transparent; flex: none; }
.al { border-right: 6px solid #4c5362; border-left: 0; }
.ar { border-left: 6px solid #4c5362; border-right: 0; }
.exp { width: 0; height: 0; border: 5px solid transparent; border-left: 5px solid #888; border-right: 0; flex: none; }
.exp.open { border: 4px solid transparent; border-top: 5px solid #888; border-bottom: 0; }
.play { display: inline-block; border: 5px solid transparent; border-left: 10px solid #4c5362; border-right: 0; }

/* form marks */
input[type=checkbox], input[type=radio] {
  appearance: none; margin: 0; flex: none; width: 18px; height: 18px; background: #fff;
  border: 1px solid #8c8c8c; border-radius: 2px; display: inline-grid; place-content: center; vertical-align: middle;
}
input[type=radio] { border-radius: 50%; }
input[type=radio]:checked::before { content: ""; width: 8px; height: 8px; border-radius: 50%; background: #1f78ea; }
input[type=checkbox]:checked {
  border-color: #2b7de1;
  background: #2b7de1 url("data:image/svg+xml,%3Csvg xmlns='http://www.w3.org/2000/svg' viewBox='0 0 16 16'%3E%3Cpath d='M3 8l4 4 6-8' fill='none' stroke='white' stroke-width='2'/%3E%3C/svg%3E") center / 16px;
}
.partial::before { content: ""; width: 12px; height: 12px; background: #99c5fb; border: 1px solid #529af2; }
input[type=checkbox]:disabled { border-color: #bbb; background-color: #f2f2f2; }
.partial:disabled::before { background: #f2f2f2; border-color: #c4c4c4; }
input[type=checkbox]:disabled:checked {
  background: #f2f2f2 url("data:image/svg+xml,%3Csvg xmlns='http://www.w3.org/2000/svg' viewBox='0 0 16 16'%3E%3Cpath d='M3 8l4 4 6-8' fill='none' stroke='%23aaa' stroke-width='2'/%3E%3C/svg%3E") center / 16px;
}

/* title and tabs */
.top { display: flex; height: 47px; flex: none; border-bottom: 1px solid #ececec; }
.brand { width: 62px; flex: none; padding-left: 11px; }
.logo { width: 44px; height: 42px; display: block; }
.topmain { flex: 1; min-width: 0; }
.quick { display: flex; height: 23px; align-items: flex-start; }
.qicons { width: 555px; flex: none; display: flex; gap: 14px; padding-left: 7px; height: 18px; align-items: center; }
.qicons .dd { gap: 6px; }
.qicons .ic { height: 19px; margin-top: -2px; }
.qicons .tri, .help .tri { border-width: 4px; border-top-width: 4px; border-bottom: 0; }
.qicons .dd .tri { border-top-color: #aaa; }
.qicons .more { border-top-color: #444; }
.qicons .morebtn { height: 10px; align-items: flex-end; border-top: 1px solid #444; }
.quick h1 { white-space: nowrap; }
.tabrow { display: flex; justify-content: space-between; height: 24px; }
.tabs { display: flex; gap: 1px; white-space: nowrap; }
.tabs a { padding: 0 16px; line-height: 23px; height: 23px; border-radius: 12px; }
.tabs .on { background: #1a8cff; color: #fff; }
.user { display: flex; align-items: center; flex: none; height: 22px; }
.avatar { width: 20px; height: 20px; }
.uname { width: 52px; }
.help { margin: 0 9px 0 10px; font-size: 18px; color: var(--icon); gap: 3px; }
.gsearch { width: 20px; height: 22px; margin-left: 6px; padding: 0 3px; border: 1px solid #ccc; border-right: 0; border-radius: 3px 0 0 3px; }
::placeholder { color: #999; opacity: 1; }

/* ribbon */
.ribbon { display: flex; height: 127px; flex: none; border-bottom: 1px solid #d9d9d9; overflow: hidden; }
.group { flex: none; position: relative; padding-top: 3px; display: flex; flex-direction: column; }
.group::after { content: ""; position: absolute; right: 0; top: 4px; bottom: 4px; width: 1px; background: var(--line); }
.group .body { display: flex; height: 91px; }
.group h2 { height: 30px; display: flex; align-items: center; justify-content: center; }
.col { flex: none; }
.col button { height: 29px; gap: 5px; }
.col .tri { margin-left: 4px; }
.off { color: #aaa; }
.big { flex: none; flex-direction: column; gap: 7px; height: 84px; margin-top: 3px; padding-top: 1px; border-radius: 4px; }
.big.on { background: var(--pale); }
.g1 { width: 179px; } .g1 .body { padding-left: 10px; gap: 6px; }
.g1 .big { width: 53px; gap: 11px; }
.g1 .big .cur { margin-right: 14px; }
.g2 { width: 346px; } .g2 .body { padding-left: 9px; }
.g2 .col:nth-child(1) { width: 107px; } .g2 .col:nth-child(2) { width: 140px; }
.g3 { width: 274px; } .g3 .body { padding-left: 11px; }
.g3 .col:nth-child(1) { width: 168px; }
.g4 { width: 95px; } .g4 .body { padding-left: 16px; }
.g4 .col { width: 40px; }
.g5 { width: 71px; } .g5 .big { width: 65px; }
.g6 { width: 304px; } .g6 .body { padding-left: 6px; }
.g6 .big { width: 77px; } .g6 .col { padding-left: 2px; }
.g7 { width: 97px; } .g7 .body { padding-left: 7px; } .g7 .big { width: 74px; }
.g8 { width: 274px; } .g8 .body { padding-left: 10px; }
.g8 .col:nth-child(1) { width: 110px; }
.g9 { width: 183px; } .g9 .body { padding-left: 9px; }

.selects { display: flex; gap: 7px; height: 33px; flex: none; padding: 3px; background: #f0f0f0; }
.selects select {
  appearance: none; width: 124px; height: 27px; padding: 0 14px 0 4px; border: 1px solid var(--line); border-radius: 4px;
  background: #fff url("data:image/svg+xml,%3Csvg xmlns='http://www.w3.org/2000/svg' viewBox='0 0 6 4'%3E%3Cpath d='M0 0h6L3 4z' fill='%23555'/%3E%3C/svg%3E") no-repeat right 6px center / 6px 4px;
}

/* workspace */
.work {
  flex: 1; min-height: 0; position: relative; display: grid; gap: 5px; background: #fff; overflow: hidden;
  grid-template-columns: 218px 449px minmax(299px, 1fr) 458px 297px; grid-template-rows: minmax(0, 1fr);
}
.colstack { display: flex; flex-direction: column; gap: 6px; min-width: 0; min-height: 0; }
.panel { display: flex; flex-direction: column; min-height: 0; min-width: 0; }
.strip { height: 15px; flex: none; background: #e6e6e6; border: 1px solid #dadada; display: flex; justify-content: flex-end; padding-right: 4px; }
.panel h3 { height: 28px; flex: none; line-height: 26px; padding-left: 10px; background: #f0f0f0; border: 1px solid var(--line); border-top: 0; color: #7a7a7a; font-weight: 500; }
.bar { height: 33px; flex: none; display: flex; align-items: center; border: 1px solid #e4e4e4; border-top: 0; border-radius: 4px; }
.navbar { padding-left: 8px; gap: 10px; }
.box { border: 1px solid var(--line); flex: 1; min-height: 0; overflow: hidden; display: flex; flex-direction: column; }
.scrollrow { flex: 1; min-height: 0; display: flex; flex-direction: row; }
.scrollrow > :first-child { flex: 1; min-width: 0; overflow: hidden; }
.vs { width: 19px; flex: none; padding-left: 4px; }
.thumb { background: #cacaca; border-radius: 5px; width: 10px; }
.hs { height: 17px; flex: none; display: flex; align-items: center; gap: 7px; padding: 0 7px; }
.hs .thumb { height: 10px; }
.hs .ar { margin-left: auto; }
.t-nav { height: 332px; margin-top: 21px; }
.h-nav { width: 152px; }
.nav .hs { padding-right: 24px; }
.navbox { margin-top: 1px; }
.tree { padding-top: 2px; white-space: nowrap; }
.tree li { height: 30px; display: flex; align-items: center; padding-left: 50px; }
.tree .top-li { padding-left: 15px; gap: 8px; }
.tree .top-li .exp { width: 0; margin-right: 1px; }
.tree .top-li .open { margin: 0 -1px 0 -2px; }
.tree span { display: flex; align-items: center; gap: 8px; height: 26px; padding-left: 4px; border-radius: 4px; }
.tree .on { background: var(--pale); }

.list { height: 337px; flex: none; }
.tools { padding-left: 5px; gap: 10px; }
.tools button { gap: 6px; height: 28px; flex: none; }
.tools .tri { margin-left: 3px; }
.tools .over { margin: 0 2px 0 auto; width: 13px; height: 24px; gap: 1px; justify-content: center; border: 1px solid #e2e2e2; border-radius: 4px; }
.over .ar { border-width: 3px; border-left-width: 4px; border-right: 0; }
.search { height: 25px; flex: none; display: flex; align-items: center; border-bottom: 1px solid #e4e4e4; padding-right: 10px; }
.search input { flex: 1; min-width: 0; border: 0; padding: 0 2px; height: 22px; background: none; }
.items { white-space: nowrap; padding-top: 2px; }
.items li { height: 30px; display: flex; align-items: center; padding: 0 32px 0 50px; }
.items .head { padding-left: 16px; gap: 4px; }
.items span { flex: 1; height: 26px; line-height: 26px; padding-left: 4px; border-radius: 3px; }
.items .on { background: var(--pale); }
.t-list { height: 99px; margin-top: 19px; }

/* tables */
table { border-collapse: separate; border-spacing: 0; table-layout: fixed; width: 100%; }
th, td { font-weight: normal; padding: 0 0 0 4px; border-right: 1px solid var(--line); border-bottom: 1px solid var(--line); white-space: nowrap; overflow: hidden; text-align: left; line-height: 20px; }
th, td:first-child { text-align: center; padding: 0; }
.hl { background: var(--head); color: #fff; font-weight: bold; }
.props { flex: 1; }
.propbox { border-top: 0; }
.ptable { height: 368px; }
.ptable th, .ptable td { height: 26px; }
.ptable td:last-child { text-align: center; padding: 0; }
.c-n { width: 27px; } .c-name { width: 144px; } .c-add { width: 51px; }
.key { color: #1f5ff5; }
.t-prop { height: 236px; margin-top: 18px; }
.pbtns { display: flex; gap: 8px; height: 34px; padding-top: 2px; flex: none; }
.pbtns button { width: 99px; justify-content: center; border: 1px solid #c4c4c4; border-radius: 4px; }

/* drawing area */
.canvas { flex: 1; min-height: 0; position: relative; background: #000; }
.cad { display: block; width: 100%; height: 100%; }
.cl { fill: none; stroke: #777; stroke-width: 1; }
.ct { font: 300 26px "Noto Sans CJK SC", sans-serif; fill: #d8d8d8; }
.ct.cjk { font-size: 18px; fill: #fff; }
.ct.gray { font-size: 20px; fill: #6c6c6c; }
.ax { font: 18px "Liberation Sans", sans-serif; }
.grip { position: absolute; background: #5d6673; display: flex; align-items: center; justify-content: center; z-index: 1; }
.grip.l, .grip.r { top: 174px; width: 5px; height: 125px; }
.grip.l { left: -5px; } .grip.r { right: -5px; }
.grip.b { bottom: -5px; left: 88px; width: 125px; height: 5px; }
.grip i { border: 3px solid transparent; }
.grip.l i { border-right-color: #ddd; margin-left: -3px; } .grip.r i { border-left-color: #ddd; margin-right: -3px; } .grip.b i { border-top-color: #ddd; margin-bottom: -3px; }
.float { position: absolute; right: 0; top: 1px; width: 41px; height: 282px; padding: 14px 2px 0 0; background: #fff; border-radius: 4px; display: flex; flex-direction: column; align-items: center; gap: 9px; }
.float button { flex-direction: column; gap: 9px; }
.float hr { width: 29px; margin: -4px 0; border: 0; border-top: 2px solid #777; }
.calc { height: 293px; flex: none; }
.calcbox { margin-top: 3px; }
.ctable th { height: 88px; }
.ctable th.hl { padding-left: 32px; }
.ctable td { height: 26px; }
.c-num { width: 32px; }
.cur-row td:last-child { border-bottom: 2px solid #7d7d7d; }
.calcbox .hs { height: 22px; }
.h-calc { width: 71px; }

/* display settings */
.dtabs { display: flex; gap: 4px; padding: 4px 4px 0; height: 33px; align-items: flex-end; flex: none; position: relative; }
.dtabs button { width: 75px; height: 27px; justify-content: center; background: #dcdcdc; color: #555; border-radius: 4px 4px 0 0; padding-bottom: 2px; }
.dtabs .on { width: 77px; height: 30px; background: #fff; color: var(--blue); border: 1px solid #c3c7cf; border-bottom: 0; margin-bottom: -1px; }
.dbox { flex: 1; min-height: 0; display: flex; flex-direction: column; border: 1px solid #c3c7cf; }
.radios { height: 36px; flex: none; display: grid; grid-template-columns: 113px 111px 112px auto; align-items: center; padding-left: 9px; color: #000; white-space: nowrap; }
.radios label, .floors label { display: flex; align-items: center; gap: 9px; }
.radios label { height: 34px; align-self: start; }
.floorbox { border-top: 1px solid #c3c7cf; border-bottom: 1px solid #c3c7cf; }
.floors { padding-top: 2px; }
.floors li { height: 30px; display: flex; align-items: center; padding-left: 51px; }
.floors label { flex: 1; height: 26px; padding-left: 6px; gap: 8px; }
.floors .bld { padding-left: 14px; }
.floors .bld label { padding-left: 10px; }
.floors .hover label { background: #d6e8fc; }
.floors .dis { color: #999; }
.t-floor { height: 315px; margin-top: 20px; }
.other { height: 48px; flex: none; display: flex; align-items: center; gap: 3px; padding-left: 1px; }

/* drawings and layers */
.right { gap: 7px; }
.drawings { height: 292px; flex: none; }
.dsearch { height: 31px; border: 1px solid var(--line); margin: 0 0 2px; }
.drawings .tools { gap: 8px; padding-left: 7px; height: 34px; padding-top: 2px; }
.dtable { height: 165px; }
.dtable .rest td { border-bottom: 0; height: 5px; }
.dtable tr:not(.rest) > * { height: 26px; }
.c-i { width: 28px; } .c-d { width: 228px; }
.dtable th:last-child, .dtable td:last-child { text-align: left; padding-left: 16px; }
.branch { display: block; height: 25px; line-height: 25px; margin-left: 19px; padding-left: 28px; border-left: 1px solid var(--line); background: linear-gradient(#ddd, #ddd) no-repeat 0 12px / 20px 1px; }
.branch.none { background: none; height: 6px; }
.sel td { background: #d5e8fd; }
.sel td.hl { background: var(--head); }
.sel td:nth-child(2) { box-shadow: inset -1px 1px #7d7d7d, inset -2px -2px #7d7d7d, inset 0 2px #7d7d7d; }
.h-draw { flex: 1; }
.layers { flex: 1; }
.lay { gap: 10px; padding-left: 6px; }
.lay button { gap: 5px; }
.laybox { flex: 1; margin-top: 7px; border-top: 1px solid var(--line); border-left: 1px solid var(--line); overflow: hidden; }
.c-sw { width: 64px; } .c-co { width: 45px; }
.ltable th { height: 26px; }
.ltable td { height: 33px; }
.ltable td:nth-child(1) { padding-top: 8px; }
.ltable td:nth-child(2) { text-align: center; padding: 0; }
.pointer { position: absolute; left: 696px; top: 430px; width: 330px; height: 220px; pointer-events: none; }

/* status bar */
.status { height: 34px; flex: none; display: flex; align-items: center; background: #fbfbfb; padding: 4px 0 0 3px; white-space: nowrap; overflow: hidden; }
.status > * { flex: none; }
.s-xy { width: 328px; font-size: 16px; } .s-h { width: 141px; } .s-b { width: 167px; } .s-z { width: 128px; } .s-hid { width: 130px; }
.sbtns { display: flex; gap: 5px; }
.status button { width: 31px; height: 31px; justify-content: center; gap: 6px; border: 1px solid #8e939c; border-radius: 4px; background: #fff; }
.status .wide { width: 43px; }
.status .on { background: #d5e5fa; border-color: #4590ee; }
.bright { margin-left: 7px; width: 140px; }
.zoomer { display: flex; align-items: center; }
.zoomer input { appearance: none; width: 57px; height: 24px; margin: 0; background: linear-gradient(#aaa, #aaa) no-repeat center / 100% 2px; }
.zoomer input::-webkit-slider-thumb { appearance: none; width: 11px; height: 22px; border: 1px solid #666; border-radius: 4px; background: #fff; }
.tip { margin-left: 1px; }
```
